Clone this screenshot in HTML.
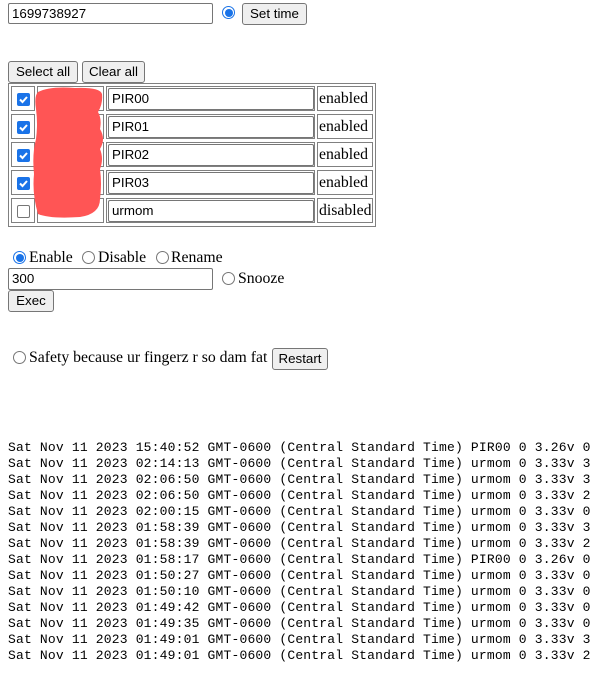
<!DOCTYPE html>
<html><head><style>
body{margin:0;width:612px;height:687px;position:relative;background:#fff;overflow:hidden}
.a{position:absolute}
.inp{position:absolute;box-sizing:border-box;border:1px solid #767676;border-radius:2px;font:13.33px "Liberation Sans",sans-serif;padding:1px 3px;line-height:17px;background:#fff}
.btn{position:absolute;box-sizing:border-box;border:1px solid #767676;border-radius:3px;background:#efefef;font:13.33px "Liberation Sans",sans-serif;text-align:center;line-height:19px}
.rad{position:absolute;width:13px;height:13px;box-sizing:border-box;border:1px solid #767676;border-radius:50%;background:#fff}
.rad.on{border:1px solid #1a73e8}
.rad.on::after{content:"";position:absolute;left:1.5px;top:1.5px;width:8px;height:8px;border-radius:50%;background:#1a73e8}
.cb{position:absolute;width:13px;height:13px;box-sizing:border-box;border-radius:2px;background:#1a73e8}
.cb svg{position:absolute;left:0;top:0}
.cb.off{background:#fff;border:1px solid #767676}
.cell{position:absolute;box-sizing:border-box;border:1px solid #808080}
.t{position:absolute;font:15.75px "Liberation Serif",serif;white-space:nowrap;line-height:18px}
pre{position:absolute;left:8px;top:440px;margin:0;font:13px/16px "Liberation Mono",monospace;letter-spacing:0.18px}
</style></head><body>
<div class="inp" style="left:8px;top:3px;width:205px;height:21px">1699738927</div>
<div class="rad on" style="left:222px;top:6px"></div>
<div class="btn" style="left:242px;top:3px;width:65px;height:22px">Set time</div>

<div class="btn" style="left:8px;top:61px;width:70px;height:22px">Select all</div>
<div class="btn" style="left:82px;top:61px;width:63px;height:22px">Clear all</div>
<div class="cell" style="left:8px;top:83px;width:368px;height:144px"></div>

<div class="cell" style="left:11px;top:86px;width:24px;height:25px"></div><div class="cell" style="left:37px;top:86px;width:67px;height:25px"></div><div class="cell" style="left:106px;top:86px;width:209px;height:25px"></div><div class="cell" style="left:317px;top:86px;width:56px;height:25px"></div>
<div class="cell" style="left:11px;top:114px;width:24px;height:25px"></div><div class="cell" style="left:37px;top:114px;width:67px;height:25px"></div><div class="cell" style="left:106px;top:114px;width:209px;height:25px"></div><div class="cell" style="left:317px;top:114px;width:56px;height:25px"></div>
<div class="cell" style="left:11px;top:142px;width:24px;height:25px"></div><div class="cell" style="left:37px;top:142px;width:67px;height:25px"></div><div class="cell" style="left:106px;top:142px;width:209px;height:25px"></div><div class="cell" style="left:317px;top:142px;width:56px;height:25px"></div>
<div class="cell" style="left:11px;top:170px;width:24px;height:25px"></div><div class="cell" style="left:37px;top:170px;width:67px;height:25px"></div><div class="cell" style="left:106px;top:170px;width:209px;height:25px"></div><div class="cell" style="left:317px;top:170px;width:56px;height:25px"></div>
<div class="cell" style="left:11px;top:198px;width:24px;height:25px"></div><div class="cell" style="left:37px;top:198px;width:67px;height:25px"></div><div class="cell" style="left:106px;top:198px;width:209px;height:25px"></div><div class="cell" style="left:317px;top:198px;width:56px;height:25px"></div>

<div class="inp" style="left:108px;top:88px;width:206px;height:22px">PIR00</div>
<div class="inp" style="left:108px;top:116px;width:206px;height:22px">PIR01</div>
<div class="inp" style="left:108px;top:144px;width:206px;height:22px">PIR02</div>
<div class="inp" style="left:108px;top:172px;width:206px;height:22px">PIR03</div>
<div class="inp" style="left:108px;top:200px;width:206px;height:22px">urmom</div>
<div class="t" style="left:319px;top:90px">enabled</div>
<div class="t" style="left:319px;top:118px">enabled</div>
<div class="t" style="left:319px;top:146px">enabled</div>
<div class="t" style="left:319px;top:174px">enabled</div>
<div class="t" style="left:319px;top:202px">disabled</div>

<div class="cb" style="left:17px;top:93px"><svg width="13" height="13"><path d="M3 6.5l2.5 2.5 4.5-5" stroke="#fff" stroke-width="2" fill="none"/></svg></div>
<div class="cb" style="left:17px;top:121px"><svg width="13" height="13"><path d="M3 6.5l2.5 2.5 4.5-5" stroke="#fff" stroke-width="2" fill="none"/></svg></div>
<div class="cb" style="left:17px;top:149px"><svg width="13" height="13"><path d="M3 6.5l2.5 2.5 4.5-5" stroke="#fff" stroke-width="2" fill="none"/></svg></div>
<div class="cb" style="left:17px;top:177px"><svg width="13" height="13"><path d="M3 6.5l2.5 2.5 4.5-5" stroke="#fff" stroke-width="2" fill="none"/></svg></div>
<div class="cb off" style="left:17px;top:205px"></div>

<svg class="a" style="left:30px;top:84px" width="80" height="138"><path d="M8 8 Q20 2 45 4 Q70 3 72 10 Q73 20 68 28 Q72 35 70 45 Q76 55 70 65 Q74 75 70 85 Q72 100 70 115 Q70 130 50 133 Q20 135 8 130 Q2 110 4 90 Q2 70 6 55 Q8 40 6 25 Q4 12 8 8Z" fill="#ff5555"/></svg>

<div class="rad on" style="left:13px;top:251px"></div><div class="t" style="left:29px;top:249px">Enable</div>
<div class="rad" style="left:82px;top:251px"></div><div class="t" style="left:98px;top:249px">Disable</div>
<div class="rad" style="left:156px;top:251px"></div><div class="t" style="left:171px;top:249px">Rename</div>
<div class="inp" style="left:8px;top:268px;width:205px;height:22px">300</div>
<div class="rad" style="left:222px;top:272px"></div><div class="t" style="left:238px;top:270px">Snooze</div>
<div class="btn" style="left:8px;top:290px;width:46px;height:22px">Exec</div>

<div class="rad" style="left:13px;top:351px"></div><div class="t" style="left:29px;top:349px">Safety because ur fingerz r so dam fat</div>
<div class="btn" style="left:272px;top:348px;width:56px;height:22px">Restart</div>

<pre>Sat Nov 11 2023 15:40:52 GMT-0600 (Central Standard Time) PIR00 0 3.26v 0
Sat Nov 11 2023 02:14:13 GMT-0600 (Central Standard Time) urmom 0 3.33v 3
Sat Nov 11 2023 02:06:50 GMT-0600 (Central Standard Time) urmom 0 3.33v 3
Sat Nov 11 2023 02:06:50 GMT-0600 (Central Standard Time) urmom 0 3.33v 2
Sat Nov 11 2023 02:00:15 GMT-0600 (Central Standard Time) urmom 0 3.33v 0
Sat Nov 11 2023 01:58:39 GMT-0600 (Central Standard Time) urmom 0 3.33v 3
Sat Nov 11 2023 01:58:39 GMT-0600 (Central Standard Time) urmom 0 3.33v 2
Sat Nov 11 2023 01:58:17 GMT-0600 (Central Standard Time) PIR00 0 3.26v 0
Sat Nov 11 2023 01:50:27 GMT-0600 (Central Standard Time) urmom 0 3.33v 0
Sat Nov 11 2023 01:50:10 GMT-0600 (Central Standard Time) urmom 0 3.33v 0
Sat Nov 11 2023 01:49:42 GMT-0600 (Central Standard Time) urmom 0 3.33v 0
Sat Nov 11 2023 01:49:35 GMT-0600 (Central Standard Time) urmom 0 3.33v 0
Sat Nov 11 2023 01:49:01 GMT-0600 (Central Standard Time) urmom 0 3.33v 3
Sat Nov 11 2023 01:49:01 GMT-0600 (Central Standard Time) urmom 0 3.33v 2</pre>
</body></html>
